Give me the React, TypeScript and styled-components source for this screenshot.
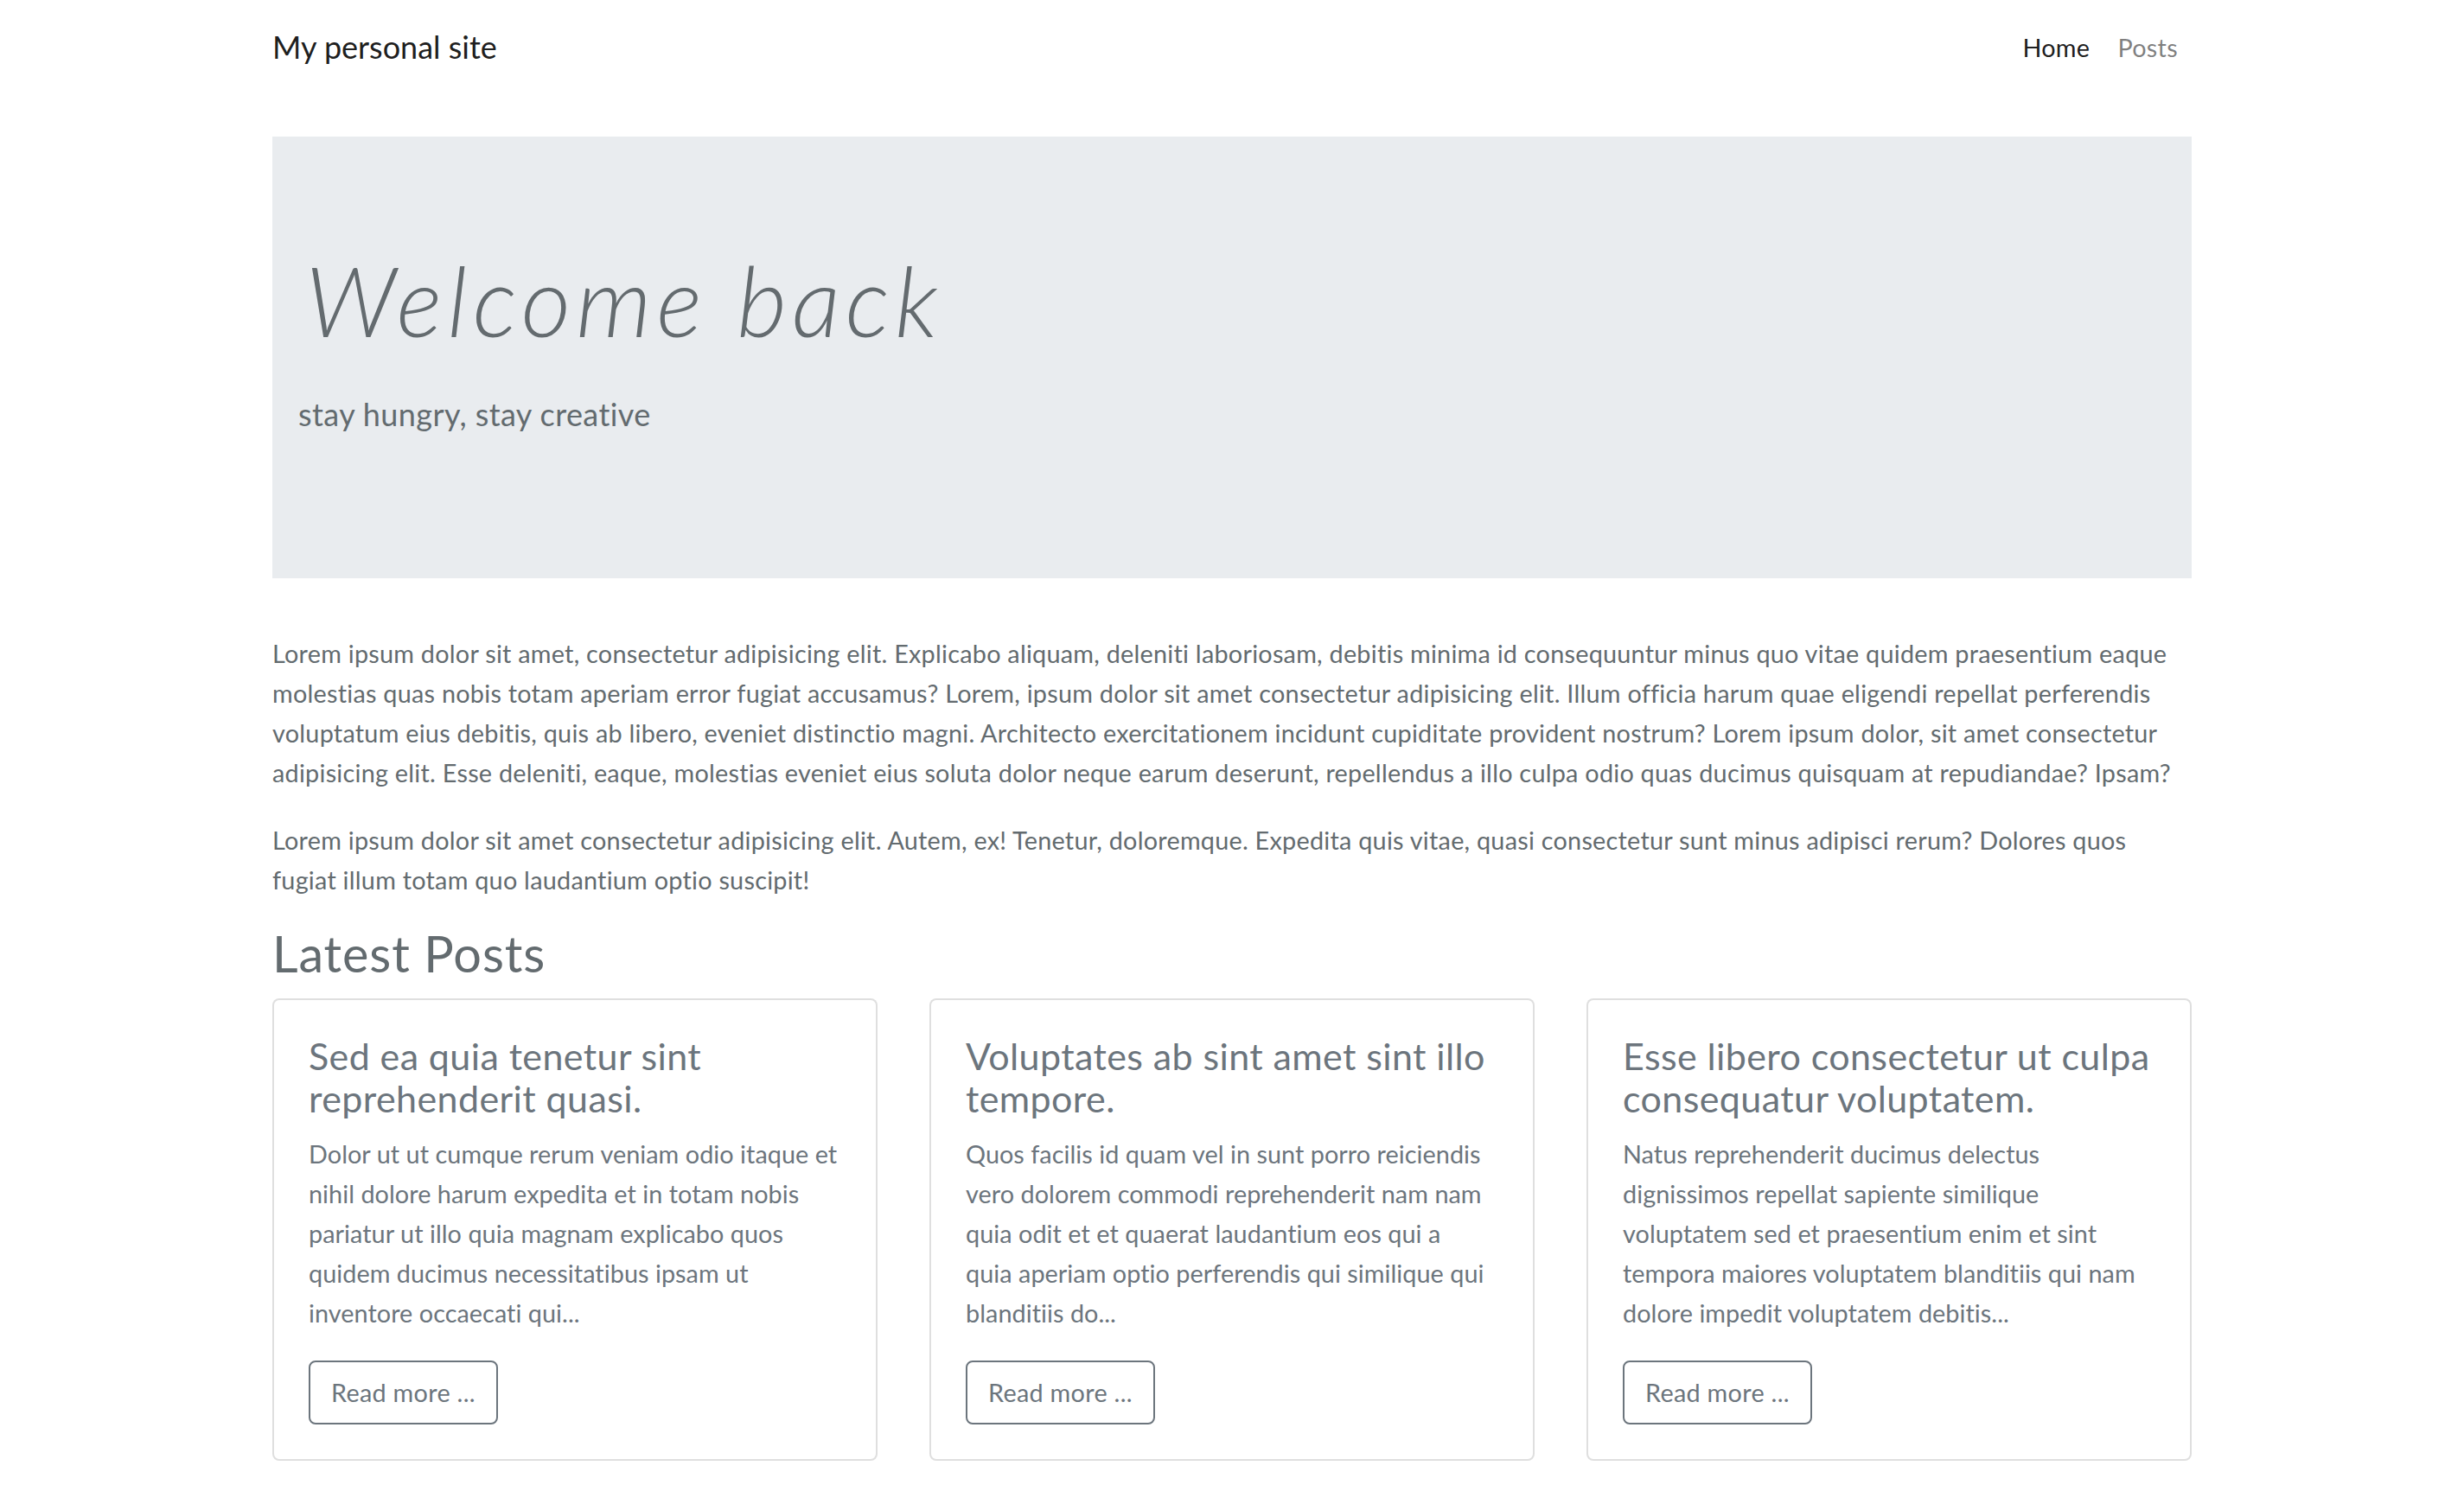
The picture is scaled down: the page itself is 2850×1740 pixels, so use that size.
import React from "react";
import styled, { createGlobalStyle } from "styled-components";

const GlobalStyle = createGlobalStyle`
  html, body {
    margin: 0;
    padding: 0;
    background: #ffffff;
  }
  body {
    font-family: Lato, "Noto Sans", "Liberation Sans", sans-serif;
    color: #636b6f;
    -webkit-font-smoothing: antialiased;
  }
  * { box-sizing: border-box; }
`;

const Container = styled.div`
  width: 2220px;
  margin: 0 auto;
`;

const NavBar = styled.nav`
  padding: 16px 0;
`;

const NavInner = styled(Container)`
  display: flex;
  align-items: center;
  justify-content: space-between;
`;

const Brand = styled.a`
  font-size: 36px;
  line-height: 57.6px;
  padding: 10px 0;
  color: rgba(0, 0, 0, 0.9);
  text-decoration: none;
`;

const NavList = styled.ul`
  display: flex;
  list-style: none;
  margin: 0;
  padding: 0;
`;

const NavLink = styled.a<{ $active?: boolean }>`
  display: block;
  padding: 16px;
  font-size: 28.8px;
  line-height: 46.08px;
  letter-spacing: 0.3px;
  color: ${(p) => (p.$active ? "rgba(0, 0, 0, 0.9)" : "rgba(0, 0, 0, 0.5)")};
  text-decoration: none;
`;

const Main = styled(Container)`
  margin-top: 48px;
`;

const Jumbotron = styled.section`
  background: #e9ecef;
  padding: 128px 30px;
  margin-bottom: 64px;
`;

const Display = styled.h1`
  margin: -6px 0 37px;
  padding-left: 8px;
  font-size: 112px;
  line-height: 1.2;
  font-weight: 300;
  font-style: italic;
  letter-spacing: 6px;
  color: #646b6f;
`;

const Lead = styled.p`
  margin: 0 0 32px;
  font-size: 36px;
  line-height: 57.6px;
  font-weight: 400;
  letter-spacing: 0.4px;
  color: #636b6f;
`;

const Paragraph = styled.p`
  margin: 0 0 32px;
  font-size: 28.8px;
  line-height: 46.08px;
  letter-spacing: 0.25px;
  color: #636b6f;
`;

const SectionTitle = styled.h2`
  margin: -4px 0 20px;
  font-size: 57.6px;
  line-height: 65px;
  font-weight: 400;
  letter-spacing: 0.9px;
  color: #636b6f;
`;

const CardGrid = styled.div`
  display: grid;
  grid-template-columns: repeat(3, 1fr);
  gap: 60px;
`;

const Card = styled.article`
  border: 2px solid rgba(0, 0, 0, 0.125);
  border-radius: 8px;
  padding: 40px;
  background: #fff;
`;

const CardTitle = styled.h5`
  margin: 0 0 17px;
  font-size: 43px;
  line-height: 49.2px;
  font-weight: 400;
  letter-spacing: 0.4px;
  color: #6c757d;
`;

const CardText = styled.p`
  margin: 0 0 32px;
  font-size: 28.8px;
  line-height: 46.08px;
  letter-spacing: 0.05px;
  color: #6c757d;
`;

const OutlineButton = styled.a`
  display: inline-block;
  padding: 12px 24px;
  border: 2px solid #6c757d;
  border-radius: 8px;
  font-size: 28.8px;
  line-height: 46.08px;
  letter-spacing: 0.3px;
  color: #6c757d;
  text-decoration: none;
`;

const Lines: React.FC<{ lines: string[] }> = ({ lines }) => (
  <>
    {lines.map((l, i) => (
      <React.Fragment key={i}>
        {l}
        {i < lines.length - 1 && <br />}
      </React.Fragment>
    ))}
  </>
);

const intro1 = [
  "Lorem ipsum dolor sit amet, consectetur adipisicing elit. Explicabo aliquam, deleniti laboriosam, debitis minima id consequuntur minus quo vitae quidem praesentium eaque",
  "molestias quas nobis totam aperiam error fugiat accusamus? Lorem, ipsum dolor sit amet consectetur adipisicing elit. Illum officia harum quae eligendi repellat perferendis",
  "voluptatum eius debitis, quis ab libero, eveniet distinctio magni. Architecto exercitationem incidunt cupiditate provident nostrum? Lorem ipsum dolor, sit amet consectetur",
  "adipisicing elit. Esse deleniti, eaque, molestias eveniet eius soluta dolor neque earum deserunt, repellendus a illo culpa odio quas ducimus quisquam at repudiandae? Ipsam?",
];

const intro2 = [
  "Lorem ipsum dolor sit amet consectetur adipisicing elit. Autem, ex! Tenetur, doloremque. Expedita quis vitae, quasi consectetur sunt minus adipisci rerum? Dolores quos",
  "fugiat illum totam quo laudantium optio suscipit!",
];

const posts = [
  {
    title: ["Sed ea quia tenetur sint", "reprehenderit quasi."],
    body: [
      "Dolor ut ut cumque rerum veniam odio itaque et",
      "nihil dolore harum expedita et in totam nobis",
      "pariatur ut illo quia magnam explicabo quos",
      "quidem ducimus necessitatibus ipsam ut",
      "inventore occaecati qui...",
    ],
  },
  {
    title: ["Voluptates ab sint amet sint illo", "tempore."],
    body: [
      "Quos facilis id quam vel in sunt porro reiciendis",
      "vero dolorem commodi reprehenderit nam nam",
      "quia odit et et quaerat laudantium eos qui a",
      "quia aperiam optio perferendis qui similique qui",
      "blanditiis do...",
    ],
  },
  {
    title: ["Esse libero consectetur ut culpa", "consequatur voluptatem."],
    body: [
      "Natus reprehenderit ducimus delectus",
      "dignissimos repellat sapiente similique",
      "voluptatem sed et praesentium enim et sint",
      "tempora maiores voluptatem blanditiis qui nam",
      "dolore impedit voluptatem debitis...",
    ],
  },
];

export default function App() {
  return (
    <>
      <GlobalStyle />
      <NavBar>
        <NavInner>
          <Brand href="#">My personal site</Brand>
          <NavList>
            <li>
              <NavLink href="#" $active>
                Home
              </NavLink>
            </li>
            <li>
              <NavLink href="#">Posts</NavLink>
            </li>
          </NavList>
        </NavInner>
      </NavBar>
      <Main>
        <Jumbotron>
          <Display>Welcome back</Display>
          <Lead>stay hungry, stay creative</Lead>
        </Jumbotron>
        <Paragraph>
          <Lines lines={intro1} />
        </Paragraph>
        <Paragraph>
          <Lines lines={intro2} />
        </Paragraph>
        <SectionTitle>Latest Posts</SectionTitle>
        <CardGrid>
          {posts.map((p, i) => (
            <Card key={i}>
              <CardTitle>
                <Lines lines={p.title} />
              </CardTitle>
              <CardText>
                <Lines lines={p.body} />
              </CardText>
              <OutlineButton href="#">Read more ...</OutlineButton>
            </Card>
          ))}
        </CardGrid>
      </Main>
    </>
  );
}
